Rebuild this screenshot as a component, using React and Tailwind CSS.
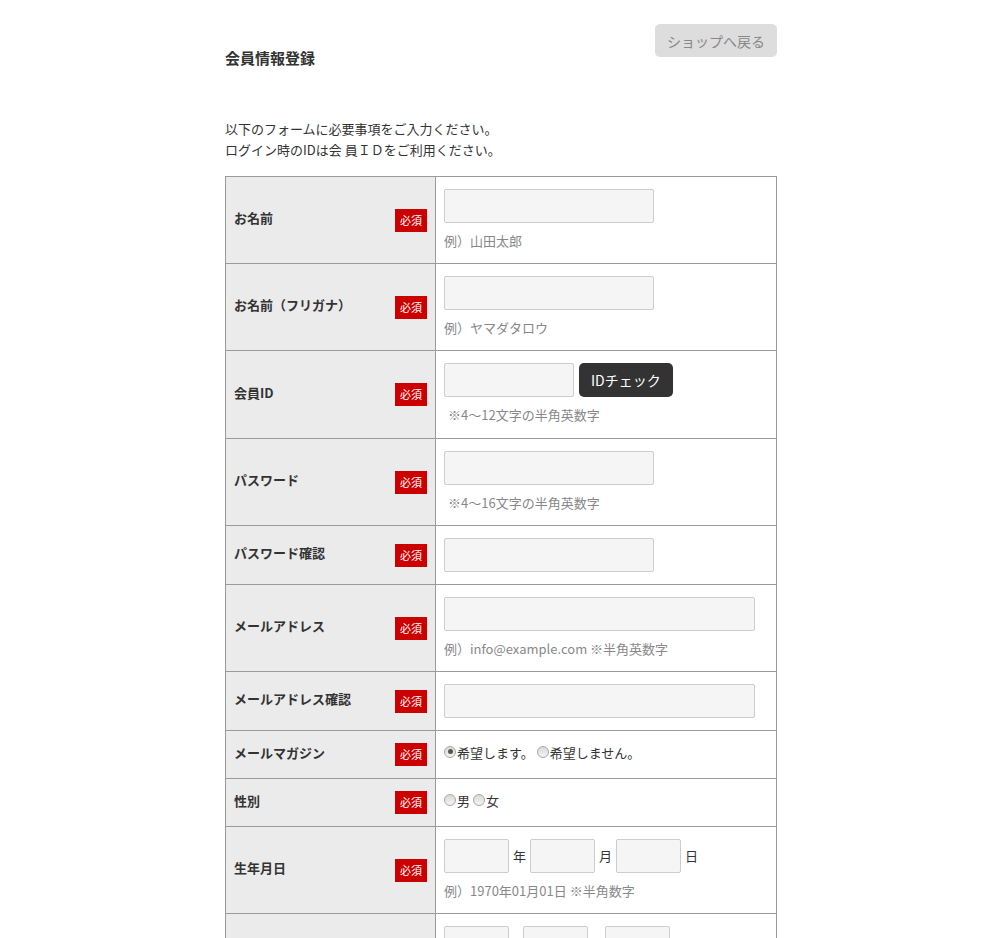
import React from "react";

const Badge = () => (
  <span className="inline-flex items-center justify-center w-[32px] h-[23px] bg-[#cc0000] text-white text-[11px] leading-none shrink-0">
    必須
  </span>
);

const Label = ({ children }) => (
  <td className="w-[210px] bg-[#ebebeb] border border-[#9a9a9a] pl-[8px] pr-[8px] align-middle">
    <div className="flex items-center justify-between">
      <span className="relative top-[-2px] text-[13px] font-bold text-[#333]">{children}</span>
      <Badge />
    </div>
  </td>
);

const Input = ({ w }) => (
  <div className={`h-[34px] ${w} bg-[#f5f5f5] border border-[#cccccc] rounded-[2px] shrink-0`} />
);

const Hint = ({ children }) => (
  <div className="mt-[7px] text-[13px] leading-[21px] text-[#888]">{children}</div>
);

const Value = ({ children }) => (
  <td className="border border-[#9a9a9a] pl-[8px] pr-[8px] py-[12px] align-top">{children}</td>
);

const Radio = ({ checked }) => (
  <span className="inline-flex items-center justify-center w-[12px] h-[12px] rounded-full border border-[#a8a8a8] bg-gradient-to-b from-[#d8d8d8] to-[#f4f4f4] mr-[1px] align-middle relative top-[-2px]">
    {checked && <span className="w-[5px] h-[5px] rounded-full bg-[#555]" />}
  </span>
);

export default function App() {
  return (
    <div
      className="min-h-screen bg-white text-[#333]"
      style={{ fontFamily: '"Noto Sans CJK JP", "Noto Sans", sans-serif' }}
    >
      <div className="w-[552px] mx-auto pt-[24px] pb-[40px]">
        <div className="flex items-start justify-between">
          <h1 className="mt-[24px] text-[15px] font-bold leading-[20px] text-[#333]">会員情報登録</h1>
          <button className="h-[33px] px-[12px] bg-[#dddddd] text-[#888] text-[14px] rounded-[5px] leading-none">
            ショップへ戻る
          </button>
        </div>
        <div className="mt-[50px] text-[13px] leading-[21px] text-[#333]">
          <p>以下のフォームに必要事項をご入力ください。</p>
          <p>ログイン時のIDは会 員ＩＤをご利用ください。</p>
        </div>
        <table className="mt-[16px] w-[552px] border-collapse border border-[#9a9a9a]">
          <tbody>
            <tr className="h-[87px]">
              <Label>お名前</Label>
              <Value>
                <Input w="w-[210px]" />
                <Hint>例）山田太郎</Hint>
              </Value>
            </tr>
            <tr className="h-[87px]">
              <Label>お名前（フリガナ）</Label>
              <Value>
                <Input w="w-[210px]" />
                <Hint>例）ヤマダタロウ</Hint>
              </Value>
            </tr>
            <tr className="h-[88px]">
              <Label>会員ID</Label>
              <Value>
                <div className="flex items-center gap-[5px]">
                  <Input w="w-[130px]" />
                  <button className="h-[34px] px-[12px] bg-[#333] text-white text-[14px] rounded-[5px] leading-none">
                    IDチェック
                  </button>
                </div>
                <Hint>
                  <span className="pl-[4px]">※4～12文字の半角英数字</span>
                </Hint>
              </Value>
            </tr>
            <tr className="h-[87px]">
              <Label>パスワード</Label>
              <Value>
                <Input w="w-[210px]" />
                <Hint>
                  <span className="pl-[4px]">※4～16文字の半角英数字</span>
                </Hint>
              </Value>
            </tr>
            <tr className="h-[59px]">
              <Label>パスワード確認</Label>
              <Value>
                <Input w="w-[210px]" />
              </Value>
            </tr>
            <tr className="h-[87px]">
              <Label>メールアドレス</Label>
              <Value>
                <Input w="w-[311px]" />
                <Hint>例）info@example.com ※半角英数字</Hint>
              </Value>
            </tr>
            <tr className="h-[59px]">
              <Label>メールアドレス確認</Label>
              <Value>
                <Input w="w-[311px]" />
              </Value>
            </tr>
            <tr className="h-[48px]">
              <Label>メールマガジン</Label>
              <td className="border border-[#9a9a9a] pl-[8px] align-middle text-[13px] leading-[24px] text-[#333]">
                <span className="relative top-[-2px]">
                  <Radio checked />希望します。 <Radio />希望しません。
                </span>
              </td>
            </tr>
            <tr className="h-[48px]">
              <Label>性別</Label>
              <td className="border border-[#9a9a9a] pl-[8px] align-middle text-[13px] leading-[24px] text-[#333]">
                <span className="relative top-[-2px]">
                  <Radio />男 <Radio />女
                </span>
              </td>
            </tr>
            <tr className="h-[87px]">
              <Label>生年月日</Label>
              <Value>
                <div className="flex items-center text-[13px] text-[#333]">
                  <Input w="w-[65px]" />
                  <span className="mx-[4px]">年</span>
                  <Input w="w-[65px]" />
                  <span className="mx-[4px]">月</span>
                  <Input w="w-[65px]" />
                  <span className="mx-[4px]">日</span>
                </div>
                <Hint>例）1970年01月01日 ※半角数字</Hint>
              </Value>
            </tr>
            <tr className="h-[87px]">
              <Label>電話番号</Label>
              <Value>
                <div className="flex items-center text-[13px] text-[#333]">
                  <Input w="w-[65px]" />
                  <span className="w-[14px] text-center">-</span>
                  <Input w="w-[65px]" />
                  <span className="w-[17px] text-center">-</span>
                  <Input w="w-[65px]" />
                </div>
                <Hint>例）03-1234-5678 ※半角数字</Hint>
              </Value>
            </tr>
          </tbody>
        </table>
      </div>
    </div>
  );
}
